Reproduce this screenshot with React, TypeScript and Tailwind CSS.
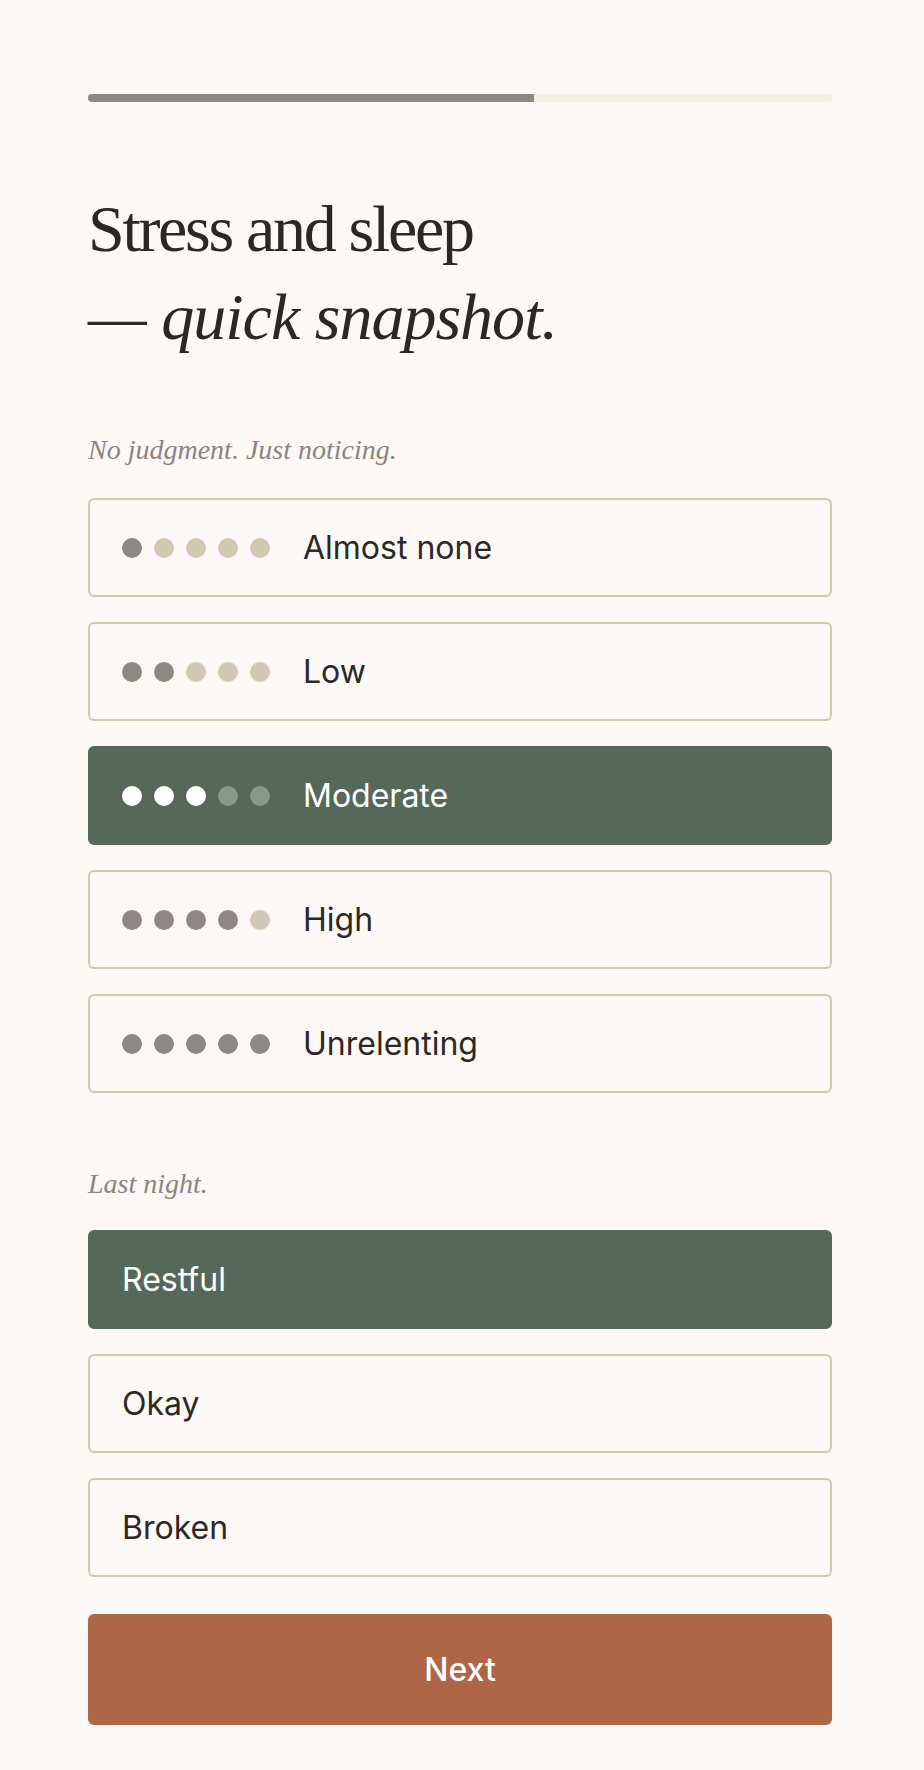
import { useState } from 'react';

const stressLevels = ['Almost none', 'Low', 'Moderate', 'High', 'Unrelenting'];
const sleepOptions = ['Restful', 'Okay', 'Broken'];

function Dots({ count, selected }: { count: number; selected: boolean }) {
  return (
    <div className="flex gap-3">
      {[0, 1, 2, 3, 4].map(i => {
        const on = i < count;
        let cls = 'bg-[#d0c8b2]';
        if (selected) cls = on ? 'bg-white' : 'bg-[#879887]';
        else if (on) cls = 'bg-[#8f8782]';
        return <span key={i} className={`block w-5 h-5 rounded-full ${cls}`} />;
      })}
    </div>
  );
}

export default function App() {
  const [stress, setStress] = useState(2);
  const [sleep, setSleep] = useState(0);

  return (
    <div className="min-h-[1770px] bg-[#fbf8f5] font-['Inter',sans-serif]">
      <div className="w-[744px] ml-[88px] pt-[94px] pb-[45px]">
        <div className="h-2 rounded-full bg-[#f3efe6] overflow-hidden">
          <div className="h-full w-[60%] bg-[#8f8882]" />
        </div>

        <h1 className="mt-[83px] font-['Liberation_Serif',serif] text-[66px] leading-[88px] tracking-[-0.035em] text-[#2a2724] font-normal">
          Stress and sleep
          <br />
          <em className="italic tracking-[-0.015em]">— quick snapshot.</em>
        </h1>

        <p className="mt-[75px] font-['Liberation_Serif',serif] italic text-[28px] leading-[28px] text-[#8a8580]">
          No judgment. Just noticing.
        </p>

        <div className="mt-[34px] flex flex-col gap-[25px]">
          {stressLevels.map((label, i) => {
            const selected = stress === i;
            return (
              <button
                key={label}
                onClick={() => setStress(i)}
                className={`h-[99px] flex items-center px-8 rounded-md border-2 text-left text-[32px] ${
                  selected
                    ? 'bg-[#55685a] border-[#55685a] text-white'
                    : 'bg-[#fbf8f5] border-[#d1c8ae] text-[#2b2825]'
                }`}
              >
                <Dots count={i + 1} selected={selected} />
                <span className="ml-[33px]">{label}</span>
              </button>
            );
          })}
        </div>

        <p className="mt-[77px] font-['Liberation_Serif',serif] italic text-[28px] leading-[28px] text-[#8a8580]">
          Last night.
        </p>

        <div className="mt-[32px] flex flex-col gap-[25px]">
          {sleepOptions.map((label, i) => {
            const selected = sleep === i;
            return (
              <button
                key={label}
                onClick={() => setSleep(i)}
                className={`h-[99px] flex items-center px-8 rounded-md border-2 text-left text-[32px] ${
                  selected
                    ? 'bg-[#55685a] border-[#55685a] text-white'
                    : 'bg-[#fbf8f5] border-[#d1c8ae] text-[#2b2825]'
                }`}
              >
                {label}
              </button>
            );
          })}
        </div>

        <button className="mt-[37px] w-full h-[111px] rounded-md bg-[#ad6747] text-white text-[32px] font-medium">
          Next
        </button>
      </div>
    </div>
  );
}
